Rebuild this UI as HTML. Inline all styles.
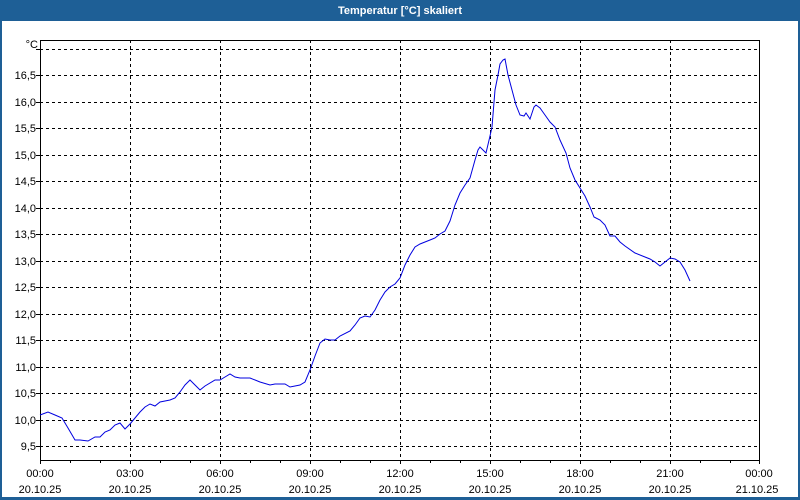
<!DOCTYPE html>
<html><head><meta charset="utf-8"><style>
html,body{margin:0;padding:0;width:800px;height:500px;overflow:hidden;background:#fff}
</style></head><body>
<svg width="800" height="500" xmlns="http://www.w3.org/2000/svg" font-family="Liberation Sans, sans-serif" font-size="11">
<rect x="0" y="0" width="800" height="500" fill="#1e5f96"/>
<rect x="2" y="21" width="796" height="476" fill="#fff"/>
<text x="400" y="14" fill="#fff" font-weight="bold" text-anchor="middle">Temperatur [°C] skaliert</text>
<g stroke="#000" stroke-dasharray="3,3" stroke-width="1">
<line x1="40" y1="49.5" x2="760" y2="49.5"/>
<line x1="40" y1="75.5" x2="760" y2="75.5"/>
<line x1="40" y1="102.5" x2="760" y2="102.5"/>
<line x1="40" y1="128.5" x2="760" y2="128.5"/>
<line x1="40" y1="155.5" x2="760" y2="155.5"/>
<line x1="40" y1="181.5" x2="760" y2="181.5"/>
<line x1="40" y1="208.5" x2="760" y2="208.5"/>
<line x1="40" y1="234.5" x2="760" y2="234.5"/>
<line x1="40" y1="261.5" x2="760" y2="261.5"/>
<line x1="40" y1="287.5" x2="760" y2="287.5"/>
<line x1="40" y1="314.5" x2="760" y2="314.5"/>
<line x1="40" y1="340.5" x2="760" y2="340.5"/>
<line x1="40" y1="367.5" x2="760" y2="367.5"/>
<line x1="40" y1="393.5" x2="760" y2="393.5"/>
<line x1="40" y1="420.5" x2="760" y2="420.5"/>
<line x1="40" y1="446.5" x2="760" y2="446.5"/>
<line x1="130.5" y1="40" x2="130.5" y2="460"/>
<line x1="220.5" y1="40" x2="220.5" y2="460"/>
<line x1="310.5" y1="40" x2="310.5" y2="460"/>
<line x1="400.5" y1="40" x2="400.5" y2="460"/>
<line x1="490.5" y1="40" x2="490.5" y2="460"/>
<line x1="580.5" y1="40" x2="580.5" y2="460"/>
<line x1="670.5" y1="40" x2="670.5" y2="460"/>
</g>
<path d="M40.5 460V40.5H759.5V460.5H40.5" fill="none" stroke="#000"/>
<g stroke="#000">
<path d="M40.5 460v4M70.5 460v3M100.5 460v3M130.5 460v4M160.5 460v3M190.5 460v3M220.5 460v4M250.5 460v3M280.5 460v3M310.5 460v4M340.5 460v3M370.5 460v3M400.5 460v4M430.5 460v3M460.5 460v3M490.5 460v4M520.5 460v3M550.5 460v3M580.5 460v4M610.5 460v3M640.5 460v3M670.5 460v4M700.5 460v3M730.5 460v3M759.5 460v4"/>
<path d="M36 49.5h4M36 75.5h4M36 102.5h4M36 128.5h4M36 155.5h4M36 181.5h4M36 208.5h4M36 234.5h4M36 261.5h4M36 287.5h4M36 314.5h4M36 340.5h4M36 367.5h4M36 393.5h4M36 420.5h4M36 446.5h4"/>
</g>
<g fill="#000" text-anchor="end">
<text x="38" y="48">°C</text>
<text x="36" y="79">16,5</text><text x="36" y="106">16,0</text><text x="36" y="132">15,5</text><text x="36" y="159">15,0</text><text x="36" y="185">14,5</text><text x="36" y="212">14,0</text><text x="36" y="238">13,5</text><text x="36" y="265">13,0</text><text x="36" y="291">12,5</text><text x="36" y="318">12,0</text><text x="36" y="344">11,5</text><text x="36" y="371">11,0</text><text x="36" y="397">10,5</text><text x="36" y="424">10,0</text><text x="36" y="450">9,5</text>
</g>
<g fill="#000" text-anchor="middle">
<text x="40" y="477">00:00</text><text x="40" y="493">20.10.25</text>
<text x="130" y="477">03:00</text><text x="130" y="493">20.10.25</text>
<text x="220" y="477">06:00</text><text x="220" y="493">20.10.25</text>
<text x="310" y="477">09:00</text><text x="310" y="493">20.10.25</text>
<text x="400" y="477">12:00</text><text x="400" y="493">20.10.25</text>
<text x="490" y="477">15:00</text><text x="490" y="493">20.10.25</text>
<text x="580" y="477">18:00</text><text x="580" y="493">20.10.25</text>
<text x="670" y="477">21:00</text><text x="670" y="493">20.10.25</text>
<text x="759" y="477">00:00</text><text x="757" y="493">21.10.25</text>
</g>
<polyline fill="none" stroke="#0000e0" stroke-width="1" points="40,415 48,412 55,415 62,418 68,428 75,440 80,440 88,441 95,437 100,437 105,432 110,430 115,425 120,423 125,429 130,424 135,418 140,412 145,407 150,404 155,406 160,402 170,400 175,398 180,392 185,385 190,380 195,385 200,390 205,386 215,380 220,380 225,377 230,374 235,377 240,378 250,378 260,382 270,385 275,384 285,384 290,387 300,385 305,382 310,370 315,356 320,343 325,339 330,340 335,340 340,336 350,331 355,325 360,318 365,316 370,317 375,310 380,300 385,292 390,287 395,284 400,278 405,265 410,255 415,247 420,244 430,240 435,238 440,234 445,231 450,221 455,205 460,193 465,185 470,178 475,160 478,150 480,147 486,153 490,136 492,127 495,90 498,75 500,64 503,60 505,59 508,75 512,90 516,105 520,115 524,116 526,113 530,119 534,107 536,105 540,108 545,115 550,122 555,127 560,140 566,153 570,168 575,180 580,188 585,196 590,207 594,217 600,220 605,225 610,236 615,236 620,242 625,246 635,253 645,257 650,259 655,262 660,266 665,262 670,258 675,259 680,262 685,270 690,281"/>
</svg>
</body></html>
